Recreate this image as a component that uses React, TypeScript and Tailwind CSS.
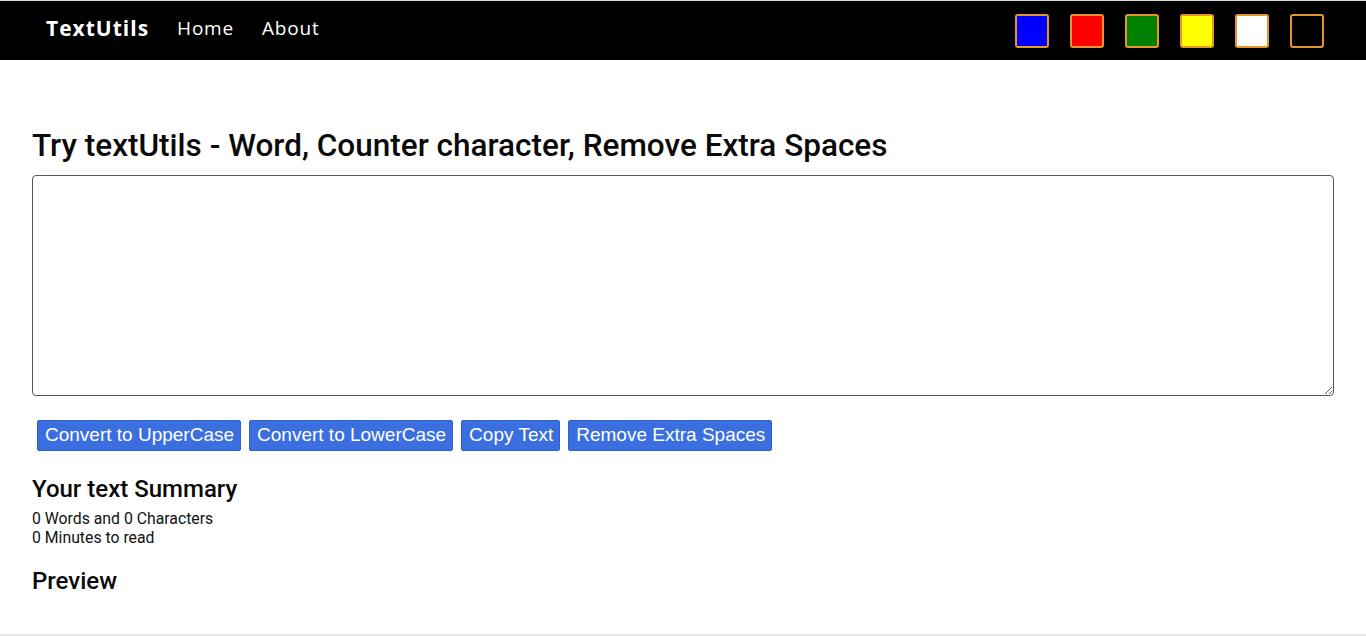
import React from "react";

const colors = ["#0000ff", "#ff0000", "#008000", "#ffff00", "#ffffff", "#000000"];

export default function App() {
  return (
    <div className="min-h-[636px] bg-white flex flex-col">
      <div className="h-px bg-[#d9d9d9]" />
      <nav className="h-[59px] bg-black flex items-center pl-[46px] pr-[42px] pb-[4px]" style={{ fontFamily: '"Open Sans", sans-serif' }}>
        <span className="text-white font-bold text-[21px] tracking-[1px] mr-[28px]">TextUtils</span>
        <span className="text-white text-[19px] tracking-[0.8px] mr-[28px]">Home</span>
        <span className="text-white text-[19px] tracking-[0.8px]">About</span>
        <div className="ml-auto flex gap-[21px] pt-[4px]">
          {colors.map((c) => (
            <div key={c} className="w-[34px] h-[34px] rounded-[3px] border-2 border-[#e8962a]" style={{ backgroundColor: c }} />
          ))}
        </div>
      </nav>
      <main className="px-[32px] flex-1" style={{ fontFamily: "Roboto, sans-serif" }}>
        <h1 className="mt-[67px] text-[31.5px] font-medium leading-[38px] text-[#0a0a0a]">
          Try textUtils - Word, Counter character, Remove Extra Spaces
        </h1>
        <textarea className="mt-[10px] block w-full h-[221px] border border-[#555] rounded-[4px] resize-y" />
        <div className="mt-[24px] flex gap-[8px] pl-[5px]" style={{ fontFamily: '"Liberation Sans", Arial, sans-serif' }}>
          {["Convert to UpperCase", "Convert to LowerCase", "Copy Text", "Remove Extra Spaces"].map((t) => (
            <button key={t} className="h-[31px] pl-[7px] pr-[6px] bg-[#3b6fdf] text-white text-[19px] rounded-[2px] border border-[#2f62d0]">
              {t}
            </button>
          ))}
        </div>
        <h2 className="mt-[24px] text-[24px] font-medium leading-[29px] text-[#0a0a0a]">Your text Summary</h2>
        <p className="mt-[5px] text-[15.8px] leading-[19px] text-[#111]">0 Words and 0 Characters</p>
        <p className="text-[15.8px] leading-[19px] text-[#111]">0 Minutes to read</p>
        <h2 className="mt-[20px] text-[24px] font-medium leading-[29px] text-[#0a0a0a]">Preview</h2>
      </main>
      <div className="h-[2px] bg-[#e6e6e6] mt-auto" />
    </div>
  );
}
